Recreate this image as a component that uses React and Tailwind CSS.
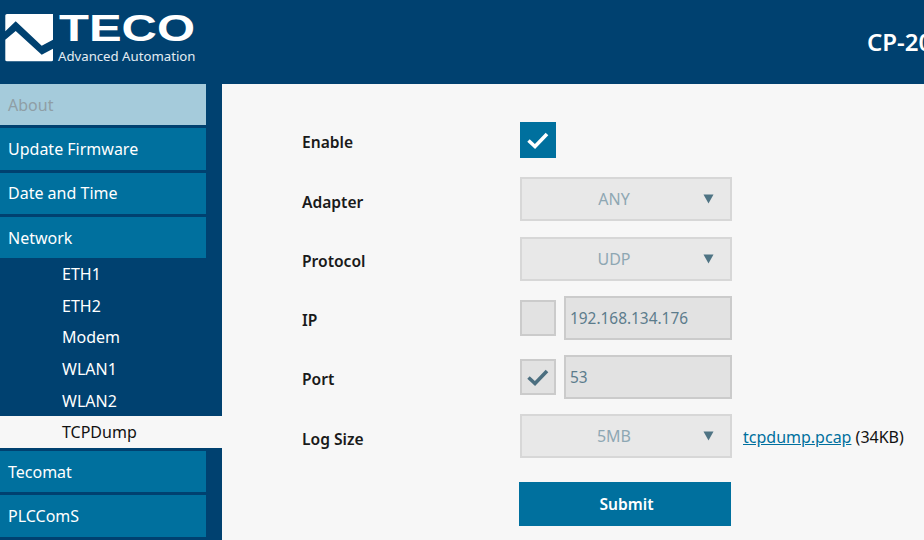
const font = { fontFamily: '"Noto Sans", "Open Sans", sans-serif' };

const menuTop = ['Update Firmware', 'Date and Time', 'Network'];
const subItems = ['ETH1', 'ETH2', 'Modem', 'WLAN1', 'WLAN2'];

const MenuItem = ({ children }) => (
  <div className="mb-[3px] flex h-[41.33px] w-[206px] items-center bg-[#00709e] pl-2 pt-[0.3px] text-[16px] text-white">
    {children}
  </div>
);

const SubItem = ({ children, active }) => (
  <div className={`flex h-[31.6px] items-center pl-[62px] pt-[0.4px] text-[16px] ${active ? 'bg-[#f7f7f7] text-[#111]' : 'text-white'}`}>
    {children}
  </div>
);

const Row = ({ label, children }) => (
  <div className="mb-[15.25px] flex h-[44px] items-center">
    <div className="w-[218px] pt-[4.5px] text-[15.6px] font-semibold leading-[24px] text-[#1a1a1a]">{label}</div>
    {children}
  </div>
);

const Arrow = () => (
  <svg width="11" height="10" viewBox="0 0 11 10" className="absolute right-[16px] top-[15px]">
    <path d="M0.5 0.5h10L5.5 9.5z" fill="#4f7484" />
  </svg>
);

const Select = ({ value }) => (
  <div className="relative flex h-[44px] w-[212px] items-center justify-center border-2 border-[#d7d7d7] bg-[#e8e8e8] pr-[24px] text-[16px] text-[#8ea7b3]">
    {value}
    <Arrow />
  </div>
);

const Check = ({ color }) => (
  <svg width="24" height="24" viewBox="0 0 24 24" fill="none">
    <path d="M2.5 12.5l6.5 6L21 6" stroke={color} strokeWidth="3.6" />
  </svg>
);

const Checkbox = ({ checked }) => (
  <div className="mr-2 flex h-[36px] w-[36px] items-center justify-center border-2 border-[#cbcbcb] bg-[#e2e2e2]">
    {checked && <Check color="#4c6f80" />}
  </div>
);

const TextBox = ({ value }) => (
  <div className="flex h-[44px] w-[168px] items-center border-2 border-[#cbcbcb] bg-[#e2e2e2] pl-[4px] pt-[1px] text-[15.4px] text-[#5c7c8c]">
    {value}
  </div>
);

const Logo = () => (
  <svg width="200" height="84" viewBox="0 0 200 84">
    <path d="M5.3 15.5Q5.3 14 7 14H53V39.7L41.7 45.7 15.7 21.3 5.3 31.3Z" fill="#fff" />
    <path d="M5.3 39.7L15.7 31 41.7 54.7 53 48.7V60Q53 61.3 51.5 61.3H7Q5.3 61.3 5.3 60Z" fill="#fff" />
    <text x="59" y="41" textLength="136" lengthAdjust="spacingAndGlyphs" fill="#fff" fontSize="37" fontWeight="700" fontFamily="Liberation Sans, sans-serif">TECO</text>
    <text x="58" y="61" fill="#e4edf3" fontSize="13.2" fontFamily="Noto Sans, sans-serif">Advanced Automation</text>
  </svg>
);

export default function App() {
  return (
    <div className="h-[540px] w-[924px] overflow-hidden bg-[#f7f7f7]" style={font}>
      <header className="flex h-[84px] items-center justify-between overflow-hidden bg-[#004170]">
        <Logo />
        <div className="mb-[1px] w-[57px] overflow-hidden whitespace-nowrap text-[24px] font-semibold text-white">CP-2000</div>
      </header>

      <div className="flex h-[456px]">
        <aside className="w-[222px] shrink-0 bg-[#004170]">
          <div className="mb-[3px] flex h-[41.33px] w-[206px] items-center bg-[#a5cbdb] pl-2 text-[16px] text-[#8f9ea5]">About</div>
          {menuTop.map((item) => (
            <MenuItem key={item}>{item}</MenuItem>
          ))}
          <div className="mt-[-3px]">
            {subItems.map((item) => (
              <SubItem key={item}>{item}</SubItem>
            ))}
            <SubItem active>TCPDump</SubItem>
          </div>
          <div className="mt-[3px]">
            <MenuItem>Tecomat</MenuItem>
            <MenuItem>PLCComS</MenuItem>
          </div>
        </aside>

        <main className="flex-1 pl-[80px] pt-[34px]">
          <Row label="Enable">
            <div className="flex h-[36px] w-[36px] items-center justify-center bg-[#00709e]">
              <Check color="#fff" />
            </div>
          </Row>
          <Row label="Adapter">
            <Select value="ANY" />
          </Row>
          <Row label="Protocol">
            <Select value="UDP" />
          </Row>
          <Row label="IP">
            <Checkbox />
            <TextBox value="192.168.134.176" />
          </Row>
          <Row label="Port">
            <Checkbox checked />
            <TextBox value="53" />
          </Row>
          <Row label="Log Size">
            <Select value="5MB" />
            <div className="ml-[11px] whitespace-nowrap pt-[1px] text-[16px] text-[#111]">
              <a href="#" className="text-[#00709e] underline">tcpdump.pcap</a> (34KB)
            </div>
          </Row>
          <div className="ml-[217px] mt-[23.5px] flex h-[44px] w-[212px] items-center justify-center bg-[#00709e] pl-[3px] pt-[1px] text-[15.6px] font-semibold text-white">
            Submit
          </div>
        </main>
      </div>
    </div>
  );
}
